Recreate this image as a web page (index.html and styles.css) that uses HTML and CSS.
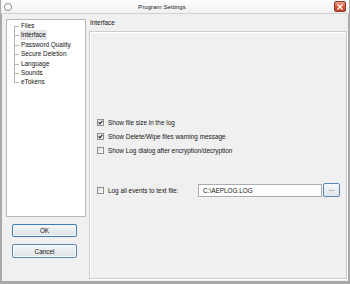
FILE: index.html
```html
<!DOCTYPE html>
<html lang="en">
<head>
    <meta charset="UTF-8">
    <title>Program Settings</title>
    <link rel="stylesheet" href="styles.css">
</head>
<body>
    <div class="window">
        <!-- Barra de título -->
        <div class="titlebar">
            <span class="app-icon"></span>
            <span class="title">Program Settings</span>
            <span class="close">
                <svg width="6" height="6" viewBox="0 0 6 6"><path d="M0.5 0.5L5.5 5.5M5.5 0.5L0.5 5.5" stroke="#fff" stroke-width="1.4"/></svg>
            </span>
        </div>

        <div class="main">
            <div class="side">
                <ul class="tree">
                    <li>Files</li>
                    <li class="selected">Interface</li>
                    <li>Password Quality</li>
                    <li>Secure Deletion</li>
                    <li>Language</li>
                    <li>Sounds</li>
                    <li>eTokens</li>
                </ul>
                <div class="actions">
                    <button class="btn default">OK</button>
                    <button class="btn">Cancel</button>
                </div>
            </div>

            <div class="content">
                <div class="page-title">Interface</div>
                <div class="page">
                    <div class="options">
                        <label class="opt"><span class="cb checked"></span>Show file size in the log</label>
                        <label class="opt"><span class="cb checked"></span>Show Delete/Wipe files warning message</label>
                        <label class="opt"><span class="cb"></span>Show Log dialog after encryption/decryption</label>
                    </div>
                    <div class="log-row">
                        <label class="opt log-label"><span class="cb"></span>Log all events to text file:</label>
                        <div class="edit">C:\AEPLOG.LOG</div>
                        <button class="browse">...</button>
                    </div>
                </div>
            </div>
        </div>
    </div>
</body>
</html>
```

FILE: styles.css
```css
body {
    margin: 0;
    background: #ffffff;
    font-family: "Liberation Sans", Arial, sans-serif;
    font-size: 6.4px;
    color: #141414;
}

.window {
    width: 350px;
    height: 284px;
    box-sizing: border-box;
    display: flex;
    flex-direction: column;
    background: #f0f0f0;
    border-left: 2px solid #a9a9a9;
    border-right: 2px solid #a9a9a9;
    border-bottom: 3px solid #a9a9a9;
}

/* Barra de título */
.titlebar {
    height: 14px;
    box-sizing: border-box;
    display: flex;
    align-items: center;
    background: linear-gradient(#fdfdfd, #f0f0f0);
    border-bottom: 1px solid #d2d2d2;
    margin: 0 -2px;
    padding: 0 2px 0 3px;
    border-left: 1px solid #a9a9a9;
    border-right: 1px solid #a9a9a9;
}

.app-icon {
    width: 6px;
    height: 6px;
    border: 1.5px solid #8c8c8c;
    border-radius: 50%;
    background: #fff;
}

.title {
    margin-left: 126px;
    font-size: 6.2px;
    color: #222;
}

.close {
    margin-left: auto;
    margin-right: 1px;
    width: 12px;
    height: 11px;
    box-sizing: border-box;
    display: flex;
    align-items: center;
    justify-content: center;
    border: 1px solid #8a3a2c;
    border-radius: 2px;
    background: linear-gradient(#eba08c, #d9583a 50%, #c9402a);
}

.main {
    flex: 1;
    display: flex;
    padding: 5px 1px 2px 4px;
}

.side {
    width: 80px;
    display: flex;
    flex-direction: column;
}

/* Árvore de páginas */
.tree {
    height: 198px;
    box-sizing: border-box;
    margin: 0;
    padding: 1px 0 0 13px;
    list-style: none;
    background: #fff;
    border: 1px solid #b9b9b9;
}

.tree li {
    position: relative;
    height: 9.4px;
    line-height: 9.4px;
    padding-left: 1px;
    width: max-content;
}

.tree li::before {
    content: "";
    position: absolute;
    left: -6px;
    top: 5px;
    width: 5px;
    border-top: 1px solid #b4b4b4;
}

.tree li::after {
    content: "";
    position: absolute;
    left: -6px;
    top: 0;
    height: 9.4px;
    border-left: 1px solid #b4b4b4;
}

.tree li:last-child::after {
    height: 5px;
}

.tree li:first-child::after {
    top: 5px;
    height: 4.4px;
}

.tree li.selected {
    background: #e6e6e6;
    padding-right: 1px;
}

.actions {
    display: flex;
    flex-direction: column;
    gap: 7px;
    padding: 7px 0 0 6px;
}

.btn {
    width: 65px;
    height: 14px;
    padding: 0;
    font-family: inherit;
    font-size: 6.4px;
    color: #141414;
    border: 1px solid #5b86b0;
    border-radius: 2px;
    background: linear-gradient(#f4f6f8, #e9ecef 50%, #dde1e5);
    box-shadow: inset 0 0 0 1px #f7fbff;
}

.btn.default {
    height: 13px;
    border-color: #3f7cb3;
}

.content {
    flex: 1;
    margin-left: 3px;
    display: flex;
    flex-direction: column;
}

.page-title {
    height: 8px;
    line-height: 8px;
    margin-bottom: 4px;
    padding-left: 1px;
}

.page {
    flex: 1;
    border: 1px solid #cdcdcd;
    box-shadow: inset 1px 1px 0 #ffffff, 1px 1px 0 #ffffff;
    padding: 83px 0 0 7px;
}

.opt {
    display: flex;
    align-items: center;
    height: 14px;
    gap: 4px;
}

.cb {
    width: 7px;
    height: 7px;
    box-sizing: border-box;
    border: 1px solid #8e8f8f;
    background: linear-gradient(135deg, #dcdcdc, #ffffff);
}

.cb.checked {
    background: url("data:image/svg+xml,%3Csvg xmlns='http://www.w3.org/2000/svg' width='5' height='5'%3E%3Cpath d='M0.6 2.4L1.9 3.9L4.4 0.8' fill='none' stroke='%23222' stroke-width='1.1'/%3E%3C/svg%3E") center / 5px 5px no-repeat, linear-gradient(135deg, #dcdcdc, #ffffff);
}

.log-row {
    display: flex;
    align-items: center;
    height: 14px;
    margin-top: 26px;
}

.log-label {
    width: 101px;
}

.edit {
    width: 124px;
    height: 13px;
    box-sizing: border-box;
    line-height: 11px;
    padding-left: 4px;
    background: #fff;
    border: 1px solid #abadb3;
}

.browse {
    margin-left: 1px;
    width: 17px;
    height: 14px;
    padding: 0 0 3px;
    font-family: inherit;
    font-size: 6.4px;
    color: #141414;
    border: 1px solid #5b86b0;
    border-radius: 2px;
    background: linear-gradient(#f4f6f8, #e2e6ea);
}
```
